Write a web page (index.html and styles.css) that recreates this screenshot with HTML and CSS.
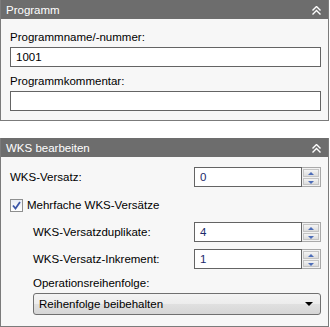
FILE: index.html
```html
<!DOCTYPE html>
<html lang="de">
<head>
    <meta charset="UTF-8">
    <title>Programm</title>
    <link rel="stylesheet" href="styles.css">
</head>
<body>
    <div class="panel">
        <div class="panel-head">
            <span>Programm</span>
            <svg class="collapse" width="9" height="9" viewBox="0 0 9 9"><path d="M0.5 4.5 L4.5 0.5 L8.5 4.5 M0.5 8.5 L4.5 4.5 L8.5 8.5" fill="none" stroke="#fff" stroke-width="1.4"/></svg>
        </div>
        <div class="panel-body">
            <div class="label">Programmname/-nummer:</div>
            <div class="textbox">1001</div>
            <div class="label second">Programmkommentar:</div>
            <div class="textbox"></div>
        </div>
    </div>

    <div class="panel wks">
        <div class="panel-head">
            <span>WKS bearbeiten</span>
            <svg class="collapse" width="9" height="9" viewBox="0 0 9 9"><path d="M0.5 4.5 L4.5 0.5 L8.5 4.5 M0.5 8.5 L4.5 4.5 L8.5 8.5" fill="none" stroke="#fff" stroke-width="1.4"/></svg>
        </div>
        <div class="panel-body">
            <div class="row">
                <span>WKS-Versatz:</span>
                <div class="spinner">
                    <div class="spin-value">0</div>
                    <div class="spin-buttons"><span class="up"></span><span class="down"></span></div>
                </div>
            </div>
            <div class="check-row">
                <span class="checkbox">
                    <svg width="9" height="9" viewBox="0 0 9 9"><path d="M1 4.5 L3.5 7.5 L8 1" fill="none" stroke="#3a55a8" stroke-width="1.8"/></svg>
                </span>
                <span>Mehrfache WKS-Versätze</span>
            </div>
            <div class="sub">
                <div class="row">
                    <span>WKS-Versatzduplikate:</span>
                    <div class="spinner">
                        <div class="spin-value">4</div>
                        <div class="spin-buttons"><span class="up"></span><span class="down"></span></div>
                    </div>
                </div>
                <div class="row">
                    <span>WKS-Versatz-Inkrement:</span>
                    <div class="spinner">
                        <div class="spin-value">1</div>
                        <div class="spin-buttons"><span class="up"></span><span class="down"></span></div>
                    </div>
                </div>
                <div class="label order">Operationsreihenfolge:</div>
                <div class="dropdown">
                    <span>Reihenfolge beibehalten</span>
                    <span class="arrow"></span>
                </div>
            </div>
        </div>
    </div>
</body>
</html>
```

FILE: styles.css
```css
body {
    margin: 0;
    font-family: "Liberation Sans", Arial, sans-serif;
    font-size: 11.5px;
    color: #000;
    background-color: #ffffff;
    width: 330px;
}
.panel {
    width: 327px;
    border: 1px solid #7b7b7b;
    border-top: none;
    background-color: #f7f7f7;
}
.panel-head {
    height: 19px;
    background-color: #6d6d6d;
    color: #ffffff;
    display: flex;
    justify-content: space-between;
    align-items: center;
    padding: 0 7px 0 5px;
}
.collapse {
    margin-top: 1px;
}
.panel-body {
    padding: 11px 7px 9px 9px;
}
.label {
    line-height: 14px;
    margin-bottom: 3px;
}
.label.second {
    margin-top: 7px;
}
.textbox {
    height: 18px;
    line-height: 18px;
    border: 1px solid #646464;
    background-color: #ffffff;
    padding-left: 5px;
}
.wks {
    margin-top: 17px;
}
.wks .panel-body {
    padding-top: 10px;
    padding-bottom: 11px;
}
.row {
    display: flex;
    justify-content: space-between;
    align-items: center;
    height: 20px;
}
.spinner {
    display: flex;
    width: 127px;
    height: 20px;
}
.spin-value {
    flex: 1;
    border: 1px solid #646464;
    background-color: #ffffff;
    line-height: 18px;
    padding-left: 5px;
    color: #1b2a6b;
}
.spin-buttons {
    width: 16px;
    border: 1px solid #a9a9a9;
    border-left: none;
    display: flex;
    flex-direction: column;
    padding: 1px;
    gap: 1px;
    background-color: #f2f2f2;
}
.spin-buttons span {
    flex: 1;
    background: linear-gradient(#f4f4f4, #dcdcdc);
    border: 1px solid #c4c4c4;
    position: relative;
}
.spin-buttons span::after {
    content: "";
    position: absolute;
    left: 4px;
    top: 2px;
    border-left: 3px solid transparent;
    border-right: 3px solid transparent;
}
.spin-buttons .up::after {
    border-bottom: 3px solid #4d6db8;
}
.spin-buttons .down::after {
    border-top: 3px solid #4d6db8;
}
.check-row {
    display: flex;
    align-items: center;
    gap: 4px;
    margin-top: 11px;
    height: 14px;
}
.checkbox {
    width: 11px;
    height: 11px;
    border: 1px solid #8e8f8f;
    background: linear-gradient(#e8ecf5, #ffffff);
    display: flex;
    align-items: center;
    justify-content: center;
}
.sub {
    margin-left: 23px;
    margin-top: 10px;
}
.sub .row + .row {
    margin-top: 7px;
}
.label.order {
    margin-top: 7px;
}
.dropdown {
    height: 20px;
    border: 1px solid #707070;
    border-radius: 3px;
    background: linear-gradient(#f4f4f4 0%, #ececec 50%, #e0e0e0 51%, #d6d6d6 100%);
    display: flex;
    justify-content: space-between;
    align-items: center;
    padding: 0 7px 0 5px;
}
.arrow {
    border-left: 4px solid transparent;
    border-right: 4px solid transparent;
    border-top: 4px solid #000;
}
```
